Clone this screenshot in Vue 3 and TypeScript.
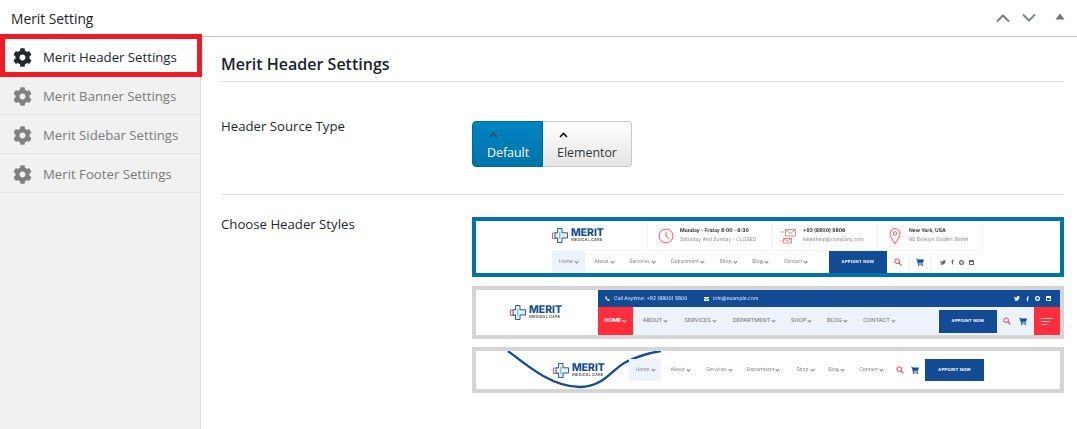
<script setup lang="ts">
const tabs: string[] = ['Merit Header Settings', 'Merit Banner Settings', 'Merit Sidebar Settings', 'Merit Footer Settings']
const gear = 'M487.4 315.7l-42.6-24.6c4.3-23.2 4.3-47 0-70.2l42.6-24.6c4.9-2.8 7.1-8.6 5.5-14-11.1-35.6-30-67.8-54.7-94.6-3.8-4.1-10-5.1-14.8-2.3L380.8 110c-17.9-15.4-38.5-27.3-60.8-35.1V25.8c0-5.6-3.9-10.5-9.4-11.7-36.7-8.2-74.3-7.8-109.2 0-5.5 1.2-9.4 6.1-9.4 11.7V75c-22.2 7.9-42.8 19.8-60.8 35.1L88.7 85.5c-4.9-2.8-11-1.9-14.8 2.3-24.7 26.7-43.6 58.9-54.7 94.6-1.7 5.4.6 11.2 5.5 14L67.3 221c-4.3 23.2-4.3 47 0 70.2l-42.6 24.6c-4.9 2.8-7.1 8.6-5.5 14 11.1 35.6 30 67.8 54.7 94.6 3.8 4.1 10 5.1 14.8 2.3l42.6-24.6c17.9 15.4 38.5 27.3 60.8 35.1v49.2c0 5.6 3.9 10.5 9.4 11.7 36.7 8.2 74.3 7.8 109.2 0 5.5-1.2 9.4-6.1 9.4-11.7v-49.2c22.2-7.9 42.8-19.8 60.8-35.1l42.6 24.6c4.9 2.8 11 1.9 14.8-2.3 24.7-26.7 43.6-58.9 54.7-94.6 1.5-5.5-.7-11.3-5.6-14.1zM256 336c-44.1 0-80-35.9-80-80s35.9-80 80-80 80 35.9 80 80-35.9 80-80 80z'
const navOne: string[] = ['Home', 'About', 'Services', 'Department', 'Shop', 'Blog', 'Contact']
const navTwo: string[] = ['HOME', 'ABOUT', 'SERVICES', 'DEPARTMENT', 'SHOP', 'BLOG', 'CONTACT']
</script>

<template>
  <div class="page">
    <svg class="defs" width="0" height="0" aria-hidden="true">
      <symbol id="mark" viewBox="0 0 16 15">
        <path d="M.5 5h3.500v5.500H.5z" fill="none" stroke="#ef3e4a" stroke-width=".9" />
        <path d="M5.500.5h4.500v4.300h5.500v5.200H10v4.500H5.500V10H3V4.800h2.500z" fill="#e4f2f9" stroke="#134b95" stroke-width=".9" />
        <path d="M7.800 4v7" stroke="#5fa9d3" stroke-width="1" />
      </symbol>
      <symbol id="search" viewBox="0 0 10 10">
        <circle cx="4" cy="4" r="2.900" fill="none" stroke="#f0303d" stroke-width="1.200" />
        <path d="M6.200 6.200 9.300 9.300" stroke="#f0303d" stroke-width="1.400" />
      </symbol>
      <symbol id="cart" viewBox="0 0 10 10">
        <path d="M0 .8h1.800l.4 1H10L8.800 6H3L3.300 7H8.800V8H2.400L1.200 1.800H0z" fill="#134b95" />
        <circle cx="3.400" cy="9" r=".9" fill="#134b95" />
        <circle cx="8" cy="9" r=".9" fill="#134b95" />
      </symbol>
      <symbol id="bird" viewBox="0 0 10 8">
        <path d="M10 1c-.4.200-.8.300-1.200.3.400-.3.800-.7.900-1.100-.4.200-.8.400-1.300.5a2 2 0 0 0-3.500 1.900C3.200 2.500 1.700 1.700.7.500c-.5 1-.2 2.100.6 2.700-.3 0-.6-.1-.9-.2 0 1 .7 1.800 1.600 2-.3.100-.6.100-.9 0 .3.800 1 1.300 1.900 1.400C2.100 7.100 1 7.400 0 7.300 4 9.500 9 7 9 2.100c.4-.3.700-.7 1-1.100z" />
      </symbol>
      <symbol id="fb" viewBox="0 0 6 10">
        <path d="M4 10V5.500h1.500L5.800 3.800H4V2.700c0-.5.200-.8.800-.8h1V.3C5.500.2 5.100.2 4.600.2 3.100.2 2.100 1.100 2.100 2.500v1.300H.5v1.700h1.600V10z" />
      </symbol>
      <symbol id="ring" viewBox="0 0 10 10">
        <path fill-rule="evenodd" d="M5 0a5 5 0 1 0 0 10A5 5 0 0 0 5 0zm0 2.500a2.500 2.500 0 1 1 0 5 2.500 2.500 0 0 1 0-5z" />
      </symbol>
      <symbol id="linked" viewBox="0 0 10 10">
        <path fill-rule="evenodd" d="M1.500 0h7A1.500 1.500 0 0 1 10 1.500v7A1.500 1.500 0 0 1 8.500 10h-7A1.500 1.500 0 0 1 0 8.500v-7A1.500 1.500 0 0 1 1.500 0zM2 4v4h6V4z" />
      </symbol>
    </svg>

    <header class="topbar">
      <h2 class="box-title">Merit Setting</h2>
      <div class="controls">
        <svg width="16" height="10" viewBox="0 0 16 10"><path d="M2 8.500 8 2.500l6 6" fill="none" stroke="#7d7d7d" stroke-width="2" /></svg>
        <svg width="16" height="10" viewBox="0 0 16 10"><path d="M2 1.500 8 7.500l6-6" fill="none" stroke="#7d8894" stroke-width="2" /></svg>
        <svg class="tri" width="10" height="7" viewBox="0 0 10 7"><path d="M5 .5 9.500 6.500H.5z" fill="#72777c" /></svg>
      </div>
    </header>

    <div class="body">
      <nav class="side">
        <a v-for="(tab, i) in tabs" :key="tab" class="tab" :class="{ active: i === 0 }">
          <svg class="gear" viewBox="0 0 512 512"><path :d="gear" /></svg>
          <span>{{ tab }}</span>
        </a>
      </nav>

      <main class="content">
        <h3 class="section-title">Merit Header Settings</h3>

        <div class="row source">
          <div class="label">Header Source Type</div>
          <div class="buttons">
            <button class="choice on">
              <svg width="9" height="6" viewBox="0 0 9 6"><path d="M1 5 4.500 1.500 8 5" fill="none" stroke="#3c434a" stroke-width="1.600" /></svg>
              <span>Default</span>
            </button>
            <button class="choice">
              <svg width="9" height="6" viewBox="0 0 9 6"><path d="M1 5 4.500 1.500 8 5" fill="none" stroke="#111" stroke-width="1.600" /></svg>
              <span>Elementor</span>
            </button>
          </div>
        </div>

        <div class="row styles">
          <div class="label">Choose Header Styles</div>
          <div class="previews">
            <!-- style one -->
            <div class="preview one">
              <div class="shot">
                <div class="one-top">
                  <div class="logo">
                    <svg class="mark"><use href="#mark" /></svg>
                    <div class="wordmark"><b>MERIT</b><i>MEDICAL CARE</i></div>
                  </div>
                  <div class="info c1">
                    <svg class="ico" viewBox="0 0 16 16"><circle cx="8" cy="8" r="7" fill="none" stroke="#f0414d" stroke-width=".9" /><path d="M8 3.500V8l3.500 3" fill="none" stroke="#f0414d" stroke-width=".9" /></svg>
                    <div><b>Monday - Friday 8:00 - 6:30</b><span>Saturday And Sunday - CLOSED</span></div>
                  </div>
                  <div class="info c2">
                    <svg class="ico" viewBox="0 0 16 16"><path d="M5 1.500h10v6.500H5zM5 1.500l5 4 5-4M3 10.500h8v4.500H3zM3 10.500l4 2.500 4-2.500M0 4h3.500M0 13h2" fill="none" stroke="#f0616d" stroke-width=".8" /></svg>
                    <div><b>+92 (8800) 9806</b><span>Needhelp@company.com</span></div>
                  </div>
                  <div class="info c3">
                    <svg class="ico" viewBox="0 0 16 16"><path d="M8 15.500C5 11 3 8.500 3 5.500a5 5 0 0 1 10 0c0 3-2 5.500-5 10z" fill="none" stroke="#f0414d" stroke-width=".9" /><circle cx="8" cy="5.500" r="1.800" fill="none" stroke="#f0414d" stroke-width=".9" /></svg>
                    <div><b>New York, USA</b><span>80 Broklyn Golden Street</span></div>
                  </div>
                </div>
                <div class="one-nav">
                  <span v-for="(n, i) in navOne" :key="n" class="item" :class="{ cur: i === 0 }">{{ n }}</span>
                  <span class="spacer"></span>
                  <span class="appoint">APPOINT NOW</span>
                  <span class="tool"><svg class="sm"><use href="#search" /></svg></span>
                  <span class="tool ruled"><svg class="sm"><use href="#cart" /></svg></span>
                  <span class="socials dark">
                    <svg class="s-bird"><use href="#bird" /></svg>
                    <svg class="s-fb"><use href="#fb" /></svg>
                    <svg class="s-sq"><use href="#ring" /></svg>
                    <svg class="s-sq"><use href="#linked" /></svg>
                  </span>
                </div>
              </div>
            </div>

            <!-- style two -->
            <div class="preview two">
              <div class="shot">
                <div class="two-logo">
                  <div class="logo">
                    <svg class="mark"><use href="#mark" /></svg>
                    <div class="wordmark"><b>MERIT</b><i>MEDICAL CARE</i></div>
                  </div>
                </div>
                <div class="two-main">
                  <div class="two-top">
                    <svg class="phone" viewBox="0 0 10 10"><path d="M2.500.5 4 3 3 4.200c.6 1.200 1.500 2.100 2.800 2.800L7 6l2.500 1.500L8.500 9.500C4.500 9.800.2 5.500.5 1.500z" fill="#fff" /></svg>
                    <span class="contact-a">Call Anytime: +92 (8800) 9806</span>
                    <svg class="mail" viewBox="0 0 10 8"><path d="M0 0h10v1.500L5 4.500 0 1.500zM0 2.800 5 5.800l5-3V8H0z" fill="#fff" /></svg>
                    <span class="contact-b">info@example.com</span>
                    <span class="socials light">
                      <svg class="s-bird"><use href="#bird" /></svg>
                      <svg class="s-fb"><use href="#fb" /></svg>
                      <svg class="s-sq"><use href="#ring" /></svg>
                      <svg class="s-sq"><use href="#linked" /></svg>
                    </span>
                  </div>
                  <div class="two-nav">
                    <span v-for="(n, i) in navTwo" :key="n" class="item" :class="{ cur: i === 0 }">{{ n }}</span>
                    <span class="spacer"></span>
                    <span class="appoint">APPOINT NOW</span>
                    <span class="tool"><svg class="sm"><use href="#search" /></svg></span>
                    <span class="tool"><svg class="sm"><use href="#cart" /></svg></span>
                    <span class="burger"><i></i><i></i><i></i></span>
                  </div>
                </div>
              </div>
            </div>

            <!-- style three -->
            <div class="preview three">
              <div class="shot">
                <svg class="wave" width="190" height="38" viewBox="0 0 190 38">
                  <path d="M32 0C50 14 76 36 104 36 128 36 136 18 150 11 160 6 172 2 185 0" fill="none" stroke="#134b95" stroke-width="2.300" />
                </svg>
                <div class="logo">
                  <svg class="mark"><use href="#mark" /></svg>
                  <div class="wordmark"><b>MERIT</b><i>MEDICAL CARE</i></div>
                </div>
                <div class="three-nav">
                  <span v-for="(n, i) in navOne" :key="n" class="item" :class="{ cur: i === 0 }">{{ n }}</span>
                  <span class="tool"><svg class="sm"><use href="#search" /></svg></span>
                  <span class="tool"><svg class="sm"><use href="#cart" /></svg></span>
                  <span class="appoint">APPOINT NOW</span>
                </div>
              </div>
            </div>
          </div>
        </div>
      </main>
    </div>
  </div>
</template>

<style>
html, body { margin: 0; background: #fff; }
</style>

<style scoped>
.page {
  width: 1077px;
  height: 429px;
  overflow: hidden;
  font-family: "Open Sans", "Noto Sans", sans-serif;
  color: #23282d;
  background: #fff;
}
.defs { position: absolute; }
.topbar {
  height: 36px;
  border-bottom: 1px solid #c3c4c7;
  display: flex;
  align-items: center;
  justify-content: space-between;
}
.box-title {
  margin: 0 0 0 11px;
  font-size: 13.800px;
  font-weight: 400;
  color: #1d2327;
}
.controls { display: flex; align-items: center; gap: 10px; margin-right: 12px; }
.tri { margin-left: 8px; margin-bottom: 3px; }
.body { display: flex; height: 392px; }

.side {
  width: 200px;
  flex: none;
  background: #f1f1f1;
  border-right: 1px solid #dcdcde;
  display: flex;
  flex-direction: column;
}
.tab {
  position: relative;
  box-sizing: border-box;
  height: 39px;
  padding: 2px 0 0 12.500px;
  display: flex;
  align-items: center;
  gap: 11.500px;
  border-bottom: 1px solid #e4e4e4;
  font-size: 13.200px;
  color: #7b7b7b;
}
.tab.active { background: #fff; color: #23282d; border-bottom-color: transparent; }
.tab.active::after {
  content: "";
  position: absolute;
  left: 0;
  top: -3px;
  width: 202px;
  height: 43px;
  box-sizing: border-box;
  border: 5px solid #ed1c24;
}
.gear { width: 19px; height: 19px; fill: #808080; }
.tab.active .gear { fill: #23282d; }

.content { flex: 1; padding: 0 13px 0 20px; }
.section-title {
  margin: 0;
  height: 44px;
  line-height: 54px;
  font-size: 16px;
  font-weight: 600;
  color: #1d2327;
  border-bottom: 1px solid #e0e0e0;
}
.row { display: flex; }
.label { width: 251px; flex: none; font-size: 13.200px; color: #23282d; }
.source { height: 112px; border-bottom: 1px solid #e0e0e0; }
.source .label { padding-top: 35px; }
.buttons { display: flex; margin-top: 39px; height: 46px; }
.choice {
  font: inherit;
  font-size: 12.400px;
  box-sizing: border-box;
  height: 46px;
  padding: 0 14px;
  display: flex;
  flex-direction: column;
  align-items: flex-start;
  justify-content: flex-start;
  color: #32373c;
  background: linear-gradient(#fff, #e5e5e5);
  border: 1px solid #c9c9c9;
  border-left: 0;
  border-radius: 0 4px 4px 0;
}
.choice svg { margin: 10px 0 0 2px; }
.choice span { margin-top: 6px; line-height: 18px; }
.choice.on {
  width: 71px;
  color: #fff;
  background: linear-gradient(#0085c3, #0073aa);
  border: 1px solid #006799;
  border-radius: 4px 0 0 4px;
}
.choice:not(.on) { width: 89px; }

.styles .label { padding-top: 20px; }
.previews { padding-top: 22px; display: flex; flex-direction: column; gap: 9px; width: 592px; }
.preview { box-sizing: border-box; width: 592px; border: 4px solid #d5d5d5; background: #fff; }
.preview.one { height: 60px; border-color: #0073aa; }
.preview.two { height: 53px; }
.preview.three { height: 46px; margin-top: -1px; }
.shot {
  height: 100%;
  filter: blur(.3px);
  font-family: Inter, "Open Sans", sans-serif;
  font-size: 5px;
  color: #808080;
  white-space: nowrap;
  text-rendering: geometricPrecision;
}

.logo { display: flex; align-items: center; gap: 3px; }
.mark { width: 16px; height: 15px; flex: none; }
.wordmark { display: flex; flex-direction: column; }
.wordmark b { font-size: 10.500px; line-height: 10px; font-weight: 800; color: #134b95; letter-spacing: -.1px; }
.wordmark i { font-style: normal; font-size: 4.200px; line-height: 5px; font-weight: 600; color: #666; }

/* one */
.one .shot { padding-left: 76px; box-sizing: border-box; width: 507px; }
.one-top { display: flex; height: 30px; border-bottom: 1px solid #f0f4fb; box-sizing: border-box; }
.one-top > .logo { width: 95px; box-sizing: border-box; }
.info {
  display: flex;
  align-items: center;
  gap: 6px;
  box-sizing: border-box;
  border-left: 1px solid #f0f4fb;
}
.info.c1 { width: 124px; padding-left: 10px; }
.info.c2 { width: 106px; padding-left: 8px; }
.info.c3 { width: 106px; padding-left: 9px; border-right: 1px solid #f0f4fb; }
.ico { width: 16px; height: 16px; flex: none; }
.info.c2 .ico { width: 17px; }
.info b, .info span { display: block; line-height: 8.500px; }
.info b { font-size: 5px; font-weight: 700; color: #333; }
.info span { font-size: 5px; color: #888; }
.one-nav {
  display: grid;
  grid-template-columns: 33px 38px 38px 53px 28px 36px 35px 16px 58px 22px 22px 52px;
  height: 22px;
  align-items: stretch;
}
.item { display: flex; align-items: center; justify-content: center; gap: 2px; }
.item::after {
  content: "";
  width: 2px;
  height: 2px;
  margin-top: -1px;
  border-right: .5px solid currentColor;
  border-bottom: .5px solid currentColor;
  transform: rotate(45deg);
}
.item.cur { background: #edf3fd; }
.spacer { display: block; }
.appoint {
  display: flex;
  align-items: center;
  justify-content: center;
  background: #134b95;
  color: #fff;
  font-size: 4.200px;
  font-weight: 700;
  letter-spacing: .2px;
}
.tool { display: flex; align-items: center; justify-content: center; }
.tool.ruled { border-left: 1px solid #f0f4fb; border-right: 1px solid #f0f4fb; }
.sm { width: 8px; height: 8px; }
.socials { display: flex; align-items: center; justify-content: center; gap: 5px; }
.s-bird { width: 6px; height: 5px; }
.s-fb { width: 3px; height: 6px; }
.s-sq { width: 5px; height: 5px; }
.socials.dark { fill: #666; }
.socials.light { fill: #fff; }

/* two */
.two .shot { display: flex; }
.two-logo { width: 122px; flex: none; display: flex; align-items: center; justify-content: center; padding-right: 2px; box-sizing: border-box; }
.two-main { flex: 1; display: flex; flex-direction: column; }
.two-top {
  height: 17px;
  background: #134b95;
  color: #e6edf8;
  display: flex;
  align-items: center;
  padding-left: 7px;
  font-size: 5px;
}
.phone { width: 5px; height: 5px; margin-right: 4px; flex: none; }
.mail { width: 5px; height: 4px; margin-right: 4px; flex: none; }
.contact-a { width: 90px; }
.contact-b { flex: 1; }
.two-top .socials { width: 46px; justify-content: flex-start; gap: 6px; }
.two-nav {
  flex: 1;
  display: grid;
  grid-template-columns: 35px 44px 46px 62px 32px 40px 44px 38px 58px 20px 12px 31px;
  background: #edf3fd;
  font-size: 5.500px;
  font-weight: 500;
}
.two-nav .item.cur { background: #ff2e3c; color: #fff; font-weight: 700; }
.two-nav .appoint { margin: 3px 0 2px; }
.burger {
  background: #ff2e3c;
  margin-left: 5px;
  display: flex;
  flex-direction: column;
  justify-content: center;
  align-items: flex-start;
  gap: 2px;
  padding-left: 7px;
  box-sizing: border-box;
}
.burger i { display: block; height: 1px; background: #ffc9cd; width: 12px; }
.burger i:nth-child(2) { width: 9px; }
.burger i:nth-child(3) { width: 6px; }

/* three */
.three .shot { position: relative; display: flex; align-items: center; padding-left: 77px; box-sizing: border-box; }
.wave { position: absolute; left: 0; top: 0; }
.three .logo { width: 76px; flex: none; position: relative; }
.three-nav {
  position: relative;
  display: grid;
  grid-template-columns: 32px 38px 40px 48px 36px 26px 44px 14px 16px 2px 59px;
  height: 22px;
}
.three-nav .appoint { grid-column: 11; }
</style>
